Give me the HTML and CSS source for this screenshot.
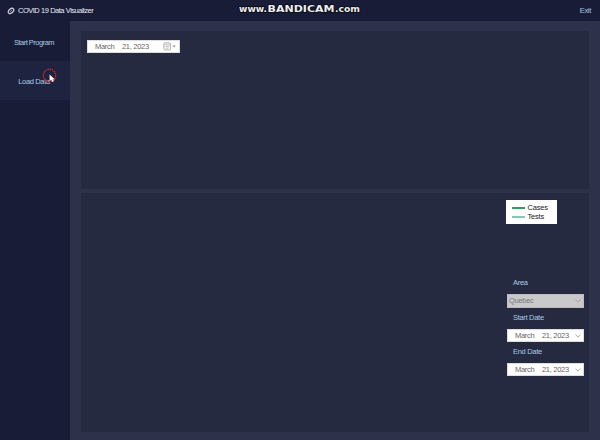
FILE: index.html
```html
<!DOCTYPE html>
<html lang="en">
<head>
<meta charset="utf-8">
<title>COVID 19 Data Visualizer</title>
<link rel="stylesheet" href="styles.css">
</head>
<body>
<div class="app">
  <header class="titlebar">
    <svg class="logo" viewBox="0 0 8 8"><g fill="none" stroke="#c9cddb" stroke-width="1.3"><ellipse cx="4" cy="4" rx="3.2" ry="2" transform="rotate(-42 4 4)"/><path d="M3 5L5 3" stroke-width=".7"/></g></svg>
    <h1 class="title">COVID 19 Data Visualizer</h1>
    <span class="exit">Exit</span>
  </header>
  <div class="body">
    <nav class="sidebar">
      <div class="nav-item">Start Program</div>
      <div class="nav-item active">Load Data</div>
    </nav>
    <main class="content">
      <section class="panel top">
        <div class="field top-date"><span class="month">March</span><span class="day">21, 2023</span>
          <svg class="calendar" viewBox="0 0 14 9"><rect x=".8" y=".8" width="6.8" height="7.2" rx="1" fill="#eee" stroke="#aaa" stroke-width=".8"/><path d="M1 2.8h6.5M3 4.6h3M3 6.3h2" stroke="#bbb" stroke-width=".7"/><path d="M9.3 3.6h3.6L11.1 5.6z" fill="#999"/></svg>
        </div>
      </section>
      <section class="panel bottom">
        <div class="legend">
          <div class="legend-row"><i class="line cases"></i>Cases</div>
          <div class="legend-row"><i class="line tests"></i>Tests</div>
        </div>
        <div class="filters">
          <label class="label area">Area</label>
          <div class="field select"><span class="month">Quebec</span><svg class="chevron" viewBox="0 0 6 4"><path d="M.6 .6L3 3.2L5.4 .6"/></svg></div>
          <label class="label">Start Date</label>
          <div class="field"><span class="month">March</span><span class="day">21, 2023</span><svg class="chevron" viewBox="0 0 6 4"><path d="M.6 .6L3 3.2L5.4 .6"/></svg></div>
          <label class="label">End Date</label>
          <div class="field"><span class="month">March</span><span class="day">21, 2023</span><svg class="chevron" viewBox="0 0 6 4"><path d="M.6 .6L3 3.2L5.4 .6"/></svg></div>
        </div>
      </section>
    </main>
  </div>
  <svg class="watermark" viewBox="0 0 126 16">
    <text class="mark-small" x="2" y="11" textLength="28" lengthAdjust="spacingAndGlyphs">www.</text>
    <text class="mark-big" x="30.5" y="11" textLength="67" lengthAdjust="spacingAndGlyphs">BANDICAM</text>
    <text class="mark-small" x="98" y="11" textLength="25" lengthAdjust="spacingAndGlyphs">.com</text>
  </svg>
  <svg class="cursor" viewBox="0 0 18 18"><circle cx="7.5" cy="7.5" r="6.2" fill="none" stroke="#b8272a" stroke-width="1.4" stroke-dasharray="1.6 .6"/><path d="M10 11.8l3-.6-1.6 2.6z" fill="#f06a70"/><path d="M7.6 6.6v6.6l1.6-1.4 1.1 2.1 1.2-.6-1-2h2.1z" fill="#fff"/></svg>
</div>
</body>
</html>
```
FILE: styles.css
```css
* { box-sizing: border-box; }
body { margin: 0; }
.app {
  position: relative;
  display: flex;
  flex-direction: column;
  width: 600px;
  height: 440px;
  overflow: hidden;
  background: #2d324a;
  color: #a8cbe4;
  font: 7.5px/10px "Liberation Sans", Arial, sans-serif;
  letter-spacing: -.3px;
}
.titlebar {
  display: flex;
  align-items: center;
  height: 21px;
  padding: 0 9px 0 7px;
  background: #191c37;
}
.logo { width: 8px; height: 8px; margin-right: 3px; }
.title { margin: 0; font-size: 7.5px; font-weight: 400; letter-spacing: -.5px; word-spacing: .2px; color: #e8ebf4; }
.exit { margin-left: auto; }
.body { display: flex; flex: 1; min-height: 0; }
.sidebar { width: 70px; padding-top: 1px; background: #191c37; }
.nav-item {
  display: flex;
  align-items: center;
  justify-content: center;
  height: 39px;
  padding: 2px 2px 0 0;
  letter-spacing: -.5px;
}
.nav-item.active { background: #1e2340; letter-spacing: -.35px; }
.content { display: flex; flex: 1; flex-direction: column; gap: 4px; padding: 10px 11px 8px; }
.panel { background: #252a40; }
.top { height: 158px; padding: 9px 6px; }
.bottom {
  display: flex;
  flex: 1;
  flex-direction: column;
  align-items: flex-end;
  padding-top: 7px;
}
.field {
  display: flex;
  align-items: center;
  width: 77px;
  height: 13px;
  padding: 0 2px 0 7px;
  border: 1px solid #ddd;
  background: #fff;
  color: #666;
}
.top-date { width: 93px; padding: 0 2px 0 7px; }
.month { width: 27px; }
.calendar { width: 14px; height: 9px; margin-left: auto; }
.chevron { width: 6px; height: 4px; margin-left: auto; fill: none; stroke: #999; stroke-width: .8; }
.legend {
  width: 51px;
  height: 24px;
  margin-right: 32.5px;
  padding: 3px 6px;
  background: #fff;
  color: #222;
  line-height: 9px;
  letter-spacing: -.2px;
}
.legend-row { display: flex; align-items: center; height: 9px; }
.line { width: 13px; height: 1px; margin-right: 3px; }
.cases { height: 2px; background: #359a62; }
.tests { height: 2px; background: #85c8b5; }
.filters { width: 77px; margin: 53px 5px 0 0; }
.label { display: block; height: 21px; padding: 5px 0 0 6px; }
.label.area { height: 17px; padding-top: 1px; }
.filters .select { height: 14px; padding-left: 1px; border-color: #bdbdbf; background: #c9c9cb; color: #77777b; }
.watermark {
  position: absolute;
  top: 1px;
  left: 237px;
  width: 126px;
  height: 16px;
  fill: #eee;
  stroke: #080a14;
  stroke-width: 1.5px;
  paint-order: stroke;
  font-family: "DejaVu Sans", sans-serif;
  font-weight: 700;
  letter-spacing: 0;
}
.mark-small { font-size: 8.5px; }
.mark-big { font-size: 9.5px; }
.cursor { position: absolute; top: 68px; left: 42px; width: 18px; height: 18px; }
```
